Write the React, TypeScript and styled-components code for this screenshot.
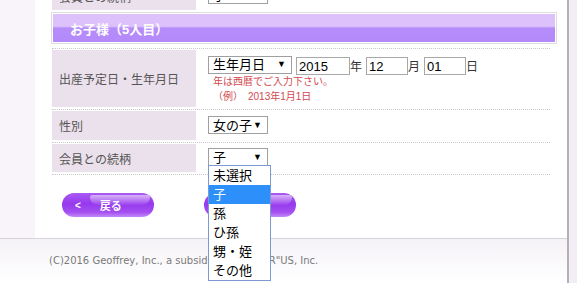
import React from 'react';
import styled, { createGlobalStyle } from 'styled-components';

const JP = `"Liberation Sans", "Noto Sans CJK JP", sans-serif`;

const GlobalStyle = createGlobalStyle`
  html, body {
    margin: 0;
    padding: 0;
    background: #ffffff;
    font-family: ${JP};
    overflow: hidden;
  }
`;

const RELATIONS = ['未選択', '子', '孫', 'ひ孫', '甥・姪', 'その他'];

const Window = styled.div`
  display: flex;
  width: 577px;
  height: 283px;
  overflow: hidden;
`;

const Main = styled.div`
  width: 567px;
  display: flex;
  flex-direction: column;
`;

const ScrollEdge = styled.div`
  flex: 1;
  border-left: 2px solid #b4b0b6;
  background: #f3eef5;
`;

const Body = styled.div`
  display: flex;
  height: 238px;
`;

const SideBar = styled.div`
  width: 35px;
  background: #f8f4f9;
`;

const Content = styled.div`
  flex: 1;
  background: #ffffff;
  padding-left: 16px;
  padding-right: 10px;
`;

/* the page is scrolled: the previous row is cut off at the top */
const Scrolled = styled.div`
  margin-top: -19px;
`;

const Row = styled.div<{ $top?: boolean; $open?: boolean }>`
  display: flex;
  margin-left: 1px;
  margin-right: 7px;
  padding: 1px 0 2px;
  border-bottom: ${p => (p.$open ? 'none' : '1px dotted #c8c8c8')};
  border-top: ${p => (p.$top ? '1px dotted #c8c8c8' : 'none')};
`;

const LabelCell = styled.div<{ $h: number }>`
  width: 144px;
  height: ${p => p.$h}px;
  background: #ebe1ec;
  display: flex;
  align-items: center;
  padding-left: 7px;
  box-sizing: border-box;
  font-size: 12px;
  color: #555555;
`;

const ValueCell = styled.div<{ $top: number }>`
  padding: ${p => p.$top}px 0 0 12px;
  position: relative;
`;

const SectionHead = styled.div`
  margin-bottom: 4px;
  border: 1px solid #dddddd;
  padding: 1px;
`;

const SectionBar = styled.div`
  height: 28px;
  background: linear-gradient(180deg, #dcc1fb 0%, #dcc1fb 44%, #b68cfb 50%, #b48afb 100%);
  color: #ffffff;
  font-weight: bold;
  font-size: 13px;
  display: flex;
  align-items: center;
  padding-left: 17px;
`;

const SelectBox = styled.div<{ $w: number }>`
  width: ${p => p.$w}px;
  height: 18px;
  box-sizing: border-box;
  border: 1px solid #a0a0a0;
  background: #ffffff;
  display: flex;
  align-items: center;
  justify-content: space-between;
  padding: 0 5px 0 4px;
  font-size: 13px;
  color: #000000;
  line-height: 1;
`;

const Arrow = styled.span`
  font-size: 9px;
`;

const DateLine = styled.div`
  display: flex;
  align-items: center;
`;

const NumInput = styled.div<{ $w: number }>`
  width: ${p => p.$w}px;
  height: 18px;
  box-sizing: border-box;
  border: 1px solid #a8a8a8;
  margin-left: 4px;
  margin-top: 3px;
  padding-left: 2px;
  font-size: 13px;
  display: flex;
  align-items: center;
`;

const Unit = styled.span`
  font-size: 12px;
  color: #333333;
  margin-top: 2px;
  width: 12px;
`;

const Notes = styled.div`
  margin-top: -1px;
  padding-left: 5px;
`;

const Note = styled.div`
  font-size: 10px;
  color: #d2494f;
  line-height: 15px;
`;

const Dropdown = styled.ul`
  position: absolute;
  left: 12px;
  top: 21px;
  width: 61px;
  margin: 0;
  padding: 0;
  list-style: none;
  border: 1px solid #7c9ad0;
  background: #ffffff;
  z-index: 5;
`;

const Option = styled.li<{ $active?: boolean }>`
  height: 19px;
  line-height: 19px;
  padding-left: 4px;
  font-size: 13px;
  background: ${p => (p.$active ? '#2d8ffa' : '#ffffff')};
  color: ${p => (p.$active ? '#ffffff' : '#000000')};
`;

const Buttons = styled.div`
  display: flex;
  gap: 50px;
  padding: 18px 0 0 11px;
`;

const PillButton = styled.button`
  position: relative;
  width: 92px;
  height: 24px;
  border: none;
  border-radius: 12px;
  padding: 0 0 0 13px;
  overflow: hidden;
  color: #ffffff;
  font-family: ${JP};
  font-size: 11px;
  font-weight: bold;
  background: linear-gradient(180deg, #a95af3 0%, #9638ee 45%, #a44ff1 80%, #c48af7 100%);
  display: flex;
  align-items: center;
  gap: 19px;

  &::after {
    content: '';
    position: absolute;
    right: 4px;
    top: 2px;
    width: 60px;
    height: 10px;
    border-radius: 10px 10px 30px 30px;
    background: linear-gradient(180deg, rgba(255, 255, 255, 0.55), rgba(255, 255, 255, 0.05));
  }
`;

const Chevron = styled.span`
  font-size: 10px;
`;

const Footer = styled.div`
  flex: 1;
  border-top: 1px solid #d6d4d8;
  background: linear-gradient(180deg, #f5f2f7 0%, #ffffff 100%);
  padding: 16px 0 0 49px;
  font-family: "DejaVu Sans", sans-serif;
  font-size: 10px;
  color: #7a7a7a;
`;

export default function App() {
  return (
    <>
      <GlobalStyle />
      <Window>
        <Main>
          <Body>
            <SideBar />
            <Content>
              <Scrolled>
                <Row $open>
                  <LabelCell $h={28}>会員との続柄</LabelCell>
                  <ValueCell $top={4}>
                    <SelectBox $w={60}>
                      <span>子</span>
                      <Arrow>▼</Arrow>
                    </SelectBox>
                  </ValueCell>
                </Row>
                <SectionHead>
                  <SectionBar>お子様（5人目）</SectionBar>
                </SectionHead>
                <Row $top>
                  <LabelCell $h={57}>出産予定日・生年月日</LabelCell>
                  <ValueCell $top={4}>
                    <DateLine>
                      <SelectBox $w={84}>
                        <span>生年月日</span>
                        <Arrow>▼</Arrow>
                      </SelectBox>
                      <NumInput $w={54}>2015</NumInput>
                      <Unit>年</Unit>
                      <NumInput $w={42}>12</NumInput>
                      <Unit>月</Unit>
                      <NumInput $w={42}>01</NumInput>
                      <Unit>日</Unit>
                    </DateLine>
                    <Notes>
                      <Note>年は西暦でご入力下さい。</Note>
                      <Note>（例）　2013年1月1日</Note>
                    </Notes>
                  </ValueCell>
                </Row>
                <Row>
                  <LabelCell $h={29}>性別</LabelCell>
                  <ValueCell $top={5}>
                    <SelectBox $w={60}>
                      <span>女の子</span>
                      <Arrow>▼</Arrow>
                    </SelectBox>
                  </ValueCell>
                </Row>
                <Row>
                  <LabelCell $h={28}>会員との続柄</LabelCell>
                  <ValueCell $top={4}>
                    <SelectBox $w={60}>
                      <span>子</span>
                      <Arrow>▼</Arrow>
                    </SelectBox>
                    <Dropdown>
                      {RELATIONS.map(r => (
                        <Option key={r} $active={r === '子'}>
                          {r}
                        </Option>
                      ))}
                    </Dropdown>
                  </ValueCell>
                </Row>
                <Buttons>
                  <PillButton>
                    <Chevron>&lt;</Chevron>
                    戻る
                  </PillButton>
                  <PillButton>
                    <Chevron>&gt;</Chevron>
                    次へ
                  </PillButton>
                </Buttons>
              </Scrolled>
            </Content>
          </Body>
          <Footer>(C)2016 Geoffrey, Inc., a subsidiary of Toys"R"US, Inc.</Footer>
        </Main>
        <ScrollEdge />
      </Window>
    </>
  );
}
